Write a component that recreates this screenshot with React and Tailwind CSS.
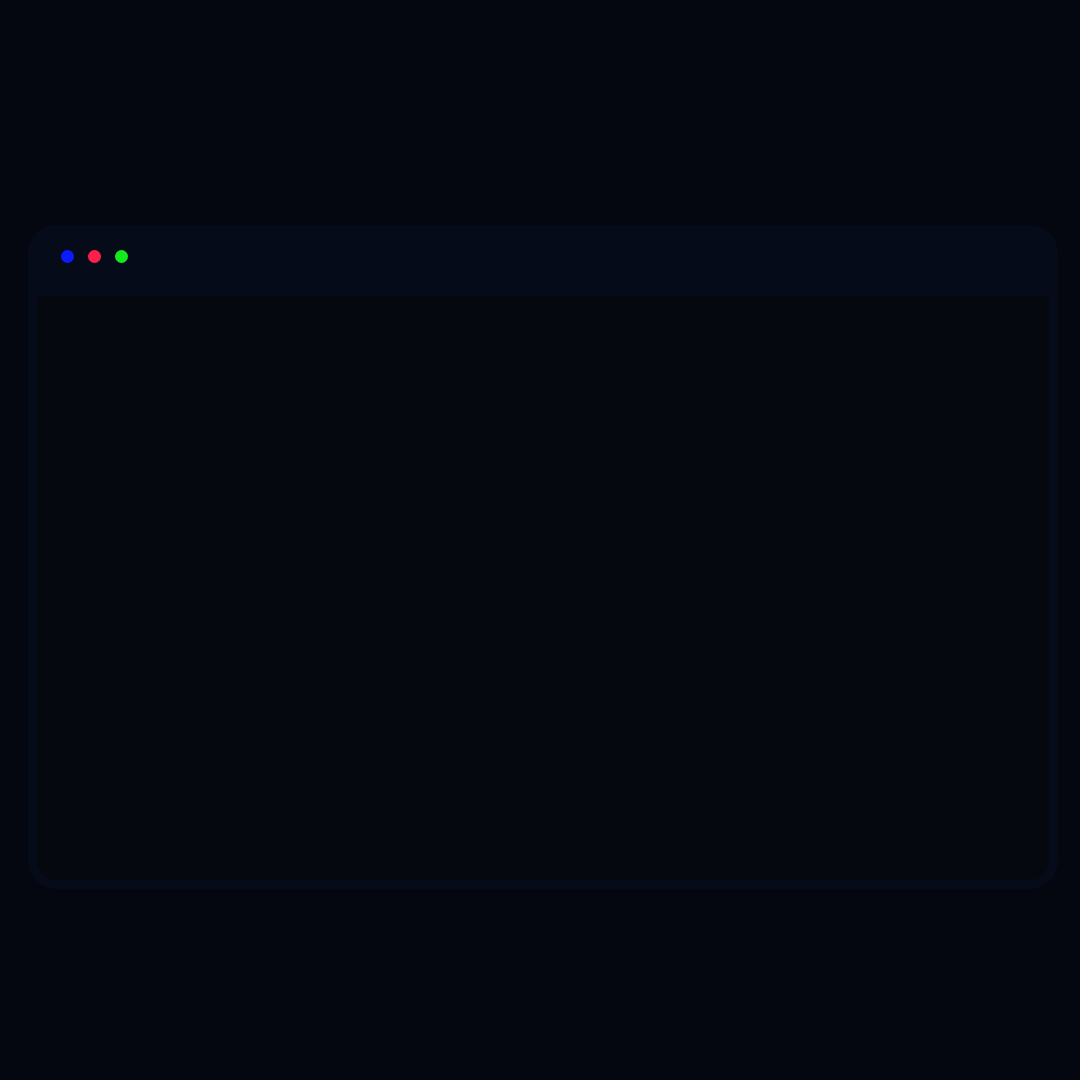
export default function App() {
  return (
    <div className="w-[1080px] h-[1080px] bg-[#04070f] flex items-center justify-center">
      <div className="w-[1030px] h-[664px] mt-[33px] ml-[5px] rounded-[28px] bg-[#060b19] flex flex-col px-[9px] pb-[9px]">
        <div className="h-[71px] shrink-0 flex items-center gap-[14px] pl-[24px] pb-[8px]">
          <span className="w-[13px] h-[13px] rounded-full bg-[#0a1cff]" />
          <span className="w-[13px] h-[13px] rounded-full bg-[#ff1f4b]" />
          <span className="w-[13px] h-[13px] rounded-full bg-[#14e81e]" />
        </div>
        <div className="flex-1 bg-[#060810] rounded-b-[20px]" />
      </div>
    </div>
  );
}
